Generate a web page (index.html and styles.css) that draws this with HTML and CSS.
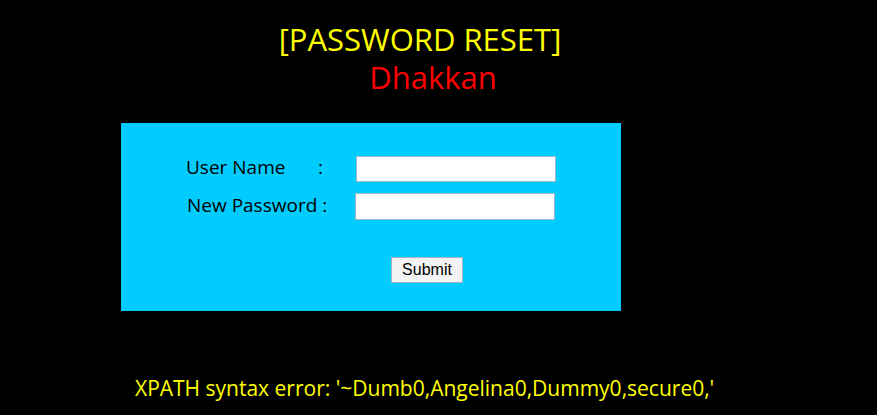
FILE: index.html
```html
<!DOCTYPE html>
<html>
<head>
<meta charset="utf-8">
<link rel="stylesheet" href="styles.css">
</head>
<body>
<div class="title">
  <div class="t1">[PASSWORD RESET]</div>
  <div class="t2">Dhakkan</div>
</div>
<div class="panel">
  <form class="form">
    <div class="row row1">
      <span class="lab lab1">User Name</span><span class="colon">:</span><input type="text" class="inp">
    </div>
    <div class="row row2">
      <span class="lab lab2">New Password :</span><input type="text" class="inp">
    </div>
    <div class="row row3">
      <input type="submit" class="btn" value="Submit">
    </div>
  </form>
</div>
<div class="error">XPATH syntax error: '~Dumb0,Angelina0,Dummy0,secure0,'</div>
</body>
</html>
```
FILE: styles.css
```css
html, body {
  margin: 0;
  padding: 0;
  background: #000000;
  font-family: "Open Sans", "Noto Sans", sans-serif;
  width: 877px;
  height: 415px;
  overflow: hidden;
}
.title {
  padding-top: 20px;
  padding-right: 37px;
  text-align: center;
  font-size: 31px;
  line-height: 38px;
}
.t1 { color: #FFFF00; }
.t2 { color: #FF0000; padding-left: 26px; }
.panel {
  margin-top: 27px;
  margin-left: 121px;
  width: 500px;
  height: 188px;
  background: #00CCFF;
  box-sizing: border-box;
  padding-top: 33px;
}
.form { margin: 0; }
.row {
  display: flex;
  align-items: center;
  font-size: 19px;
  color: #000;
}
.lab { position: relative; top: -2px; }
.colon { position: relative; top: -2px; }
.row1 { padding-left: 65px; height: 26px; }
.row2 { padding-left: 66px; height: 27px; margin-top: 11px; }
.row3 { padding-left: 270px; height: 26px; margin-top: 37px; }
.lab1 { width: 132px; }
.colon { width: 38px; }
.lab2 { width: 168px; }
.inp {
  width: 200px;
  height: 26px;
  box-sizing: border-box;
  border: 1px solid #9cb6c6;
  background: #fff;
  margin: 0;
  padding: 0 3px;
}
.row2 .inp { height: 27px; }
.btn {
  width: 72px;
  height: 26px;
  box-sizing: border-box;
  margin: 0;
  padding: 0;
  background: #f4f4f4;
  border: 1px solid #a8b4bc;
  border-radius: 1px;
  font-family: "Liberation Sans", Arial, sans-serif;
  font-size: 16px;
  color: #000;
}
.error {
  margin-top: 64px;
  padding-left: 135px;
  color: #FFFF00;
  font-size: 21px;
  line-height: 26px;
}
```
